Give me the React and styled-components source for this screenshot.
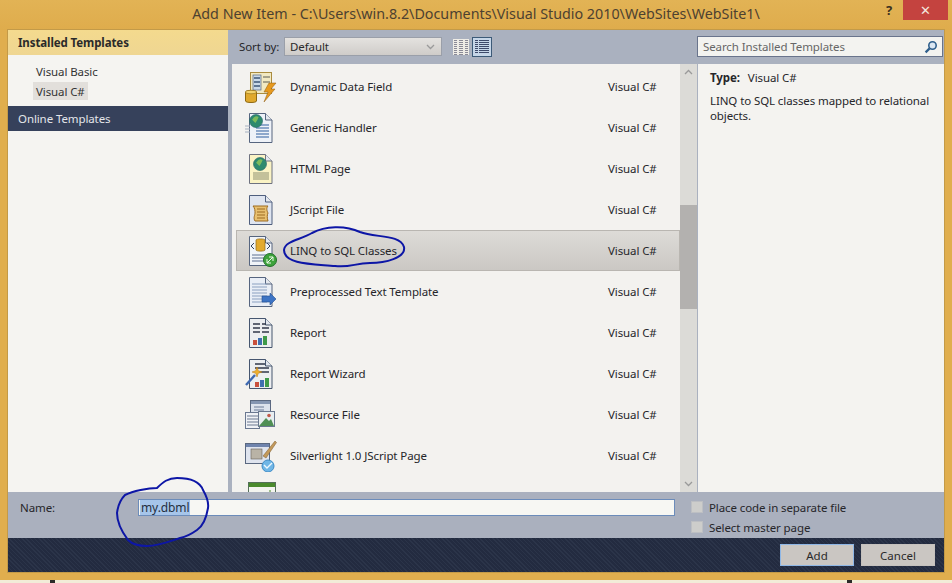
import React from "react";
import styled, { createGlobalStyle, css } from "styled-components";

const Global = createGlobalStyle`
  html, body { margin: 0; padding: 0; background: #e0ae4e; }
  * { box-sizing: border-box; }
`;
const FONT = `"Noto Sans", "Open Sans", "Liberation Sans", sans-serif`;

const Screen = styled.div`
  position: relative; width: 952px; height: 583px; overflow: hidden;
  display: flex; flex-direction: column; background: #e0ae4e; font-family: ${FONT}; font-size: 11.5px; letter-spacing: -0.1px; color: #26262a;
`;
const TitleBar = styled.header`
  height: 30px; flex: none; display: grid; grid-template-columns: 1fr auto 1fr; align-items: start;
  background: linear-gradient(#e2b355, #dfac4c);
`;
const Title = styled.h1`
  grid-column: 2; margin: 4px 0 0; font-weight: 400; font-size: 14.3px; letter-spacing: 0; line-height: 20px; color: #4d4130; white-space: nowrap;
`;
const Controls = styled.div`
  grid-column: 3; justify-self: end; display: flex; align-items: flex-start; margin-right: 4px;
`;
const Help = styled.span`
  font-weight: 700; font-size: 13px; line-height: 20px; color: #3a3020; margin-right: 11px;
`;
const Close = styled.span`
  width: 45px; height: 20px; display: flex; align-items: center; justify-content: center;
  background: #c4433f; color: #f3e6de; font-size: 13px; line-height: 1;
`;
const Dialog = styled.div`
  width: 936px; height: 542px; margin-left: 8px; flex: none; display: flex; flex-direction: column;
  outline: 1px solid #c39a48;
`;
const Main = styled.div`
  height: 462px; flex: none; display: grid; grid-template-columns: 220px 1fr;
`;
const Sidebar = styled.nav`
  background: #f5f4f1; display: flex; flex-direction: column;
`;
const SideHeader = styled.div`
  height: 25px; padding-left: 10px; display: flex; align-items: center; font-weight: 700;
  background: linear-gradient(#f4da8e, #efd692); color: #2a2a2a;
`;
const TreeList = styled.div`
  padding: 7px 0 6px 25px; display: flex; flex-direction: column; align-items: flex-start; gap: 2px;
`;
const TreeItem = styled.div`
  height: 18px; padding: 0 3px; display: flex; align-items: center; color: #333;
  ${p => p.$selected && css`background: #e2dfdb;`}
`;
const OnlineBar = styled.div`
  height: 25px; padding-left: 10px; display: flex; align-items: center; background: #36415b; color: #e4e6ea;
`;
const Content = styled.div`
  background: #aab1bf; display: flex; flex-direction: column; min-width: 0;
`;
const Toolbar = styled.div`
  height: 34px; flex: none; display: flex; align-items: center; padding: 0 1px 1px 11px;
`;
const SortLabel = styled.span`
  width: 45px; color: #26262a;
`;
const SortSelect = styled.div`
  width: 158px; height: 19px; padding: 0 6px 0 5px; display: flex; align-items: center; justify-content: space-between;
  background: linear-gradient(#e4e2df, #cfccc9); border: 1px solid #9a9fa9; color: #2a2a2a;
`;
const ViewButton = styled.span`
  width: 20px; height: 20px; display: flex; align-items: center; justify-content: center;
  margin-left: ${p => p.$first ? "9px" : "1px"};
  ${p => p.$active && css`background: #c6d6e8; border: 1px solid #3c5a78;`}
`;
const SearchBox = styled.div`
  width: 246px; height: 21px; margin-left: auto; padding: 0 4px 0 5px; display: flex; align-items: center; justify-content: space-between;
  background: #f3f3f0; border: 1px solid #69748c; color: #666;
`;
const Panes = styled.div`
  height: 428px; display: flex;
`;
const ItemList = styled.div`
  width: 448px; margin-left: 4px; padding-top: 2px; overflow: hidden; background: #f3f2ef; flex: none;
`;
const ItemRow = styled.div`
  height: 41px; margin-left: 4px; padding-left: 8px; display: flex; align-items: center; border: 1px solid transparent;
  ${p => p.$selected && css`
    background: linear-gradient(#dddbd7, #cbc8c4);
    border-color: #b9b6b1;
  `}
`;
const ItemIcon = styled.span`
  width: 32px; height: 32px; flex: none; display: flex; margin-right: 13px;
`;
const ItemName = styled.span`
  flex: 1; color: #26262a; white-space: nowrap;
`;
const ItemType = styled.span`
  width: 71px; flex: none; color: #26262a;
`;
const Scrollbar = styled.div`
  width: 17px; flex: none; display: flex; flex-direction: column; background: #dcdbd7;
`;
const ScrollArrow = styled.div`
  height: 16px; flex: none; display: flex; align-items: center; justify-content: center;
`;
const TrackGap = styled.div`
  height: ${p => p.$h}px; flex: none;
`;
const Thumb = styled.div`
  height: 104px; flex: none; background: #b3b1af;
`;
const Details = styled.aside`
  flex: 1; background: #f4f3f0; border-left: 1px solid #aab1bf; padding: 5px 12px; line-height: 15px; color: #26262a;
`;
const TypeLine = styled.div`
  margin-bottom: 8px; margin-top: 1px;
`;
const TypeKey = styled.b`
  font-weight: 700; margin-right: 8px;
`;
const NameRow = styled.div`
  height: 46px; flex: none; background: #aab0be; display: flex; padding: 7px 0 0 12px; align-items: flex-start;
`;
const NameLabel = styled.label`
  width: 118px; line-height: 17px; color: #26262a;
`;
const NameField = styled.div`
  width: 537px; height: 17px; background: #f7f7f3; border: 1px solid #6c8cba; display: flex; align-items: center; padding-left: 1px;
`;
const Selection = styled.span`
  background: #a6c5ea; padding: 0 1px; line-height: 15px; color: #25303e; font-size: 12px;
`;
const Checks = styled.div`
  margin-left: 16px; margin-top: 1px; display: flex; flex-direction: column; gap: 6px;
`;
const CheckRow = styled.div`
  height: 14px; display: flex; align-items: center; gap: 6px; color: #26262a;
`;
const CheckBox = styled.span`
  width: 12px; height: 12px; background: #cdcdcb; border: 1px solid #bdbfc3;
`;
const Footer = styled.footer`
  height: 34px; flex: none; display: flex; justify-content: flex-end; align-items: center; gap: 7px; padding-right: 9px;
  background-color: #262f45;
  background-image: repeating-linear-gradient(45deg, #2b3449 0 1px, #232b40 1px 3px);
`;
const DialogButton = styled.button`
  width: 74px; height: 22px; padding: 0; font: inherit; color: #2a2a2a; background: #cac6c2;
  border: 1px solid ${p => p.$primary ? "#8fb7e6" : "#c5c1bd"};
`;
const BelowStrip = styled.div`
  margin-top: 8px; height: 3px; background: #f2ecd8; display: flex;
`;
const Speck = styled.span`
  width: 5px; height: 3px; background: #2b2a28; margin-left: ${p => p.$x}px;
`;
const Annotations = styled.svg`
  position: absolute; left: 0; top: 0; pointer-events: none;
`;

const Page = ({ fill = "#f7f7f2", stroke = "#56657f", children }) => (
  <>
    <path d="M4.5 1.5h16l6.5 6.500V30.500H4.500z" fill={fill} stroke={stroke} />
    <path d="M20.500 1.500v6.500H27" fill="#e4e8ee" stroke={stroke} />
    {children}
  </>
);
const Svg = ({ children }) => <svg width="32" height="32" viewBox="0 0 32 32">{children}</svg>;
const Lines = ({ x = 10, w = 12, ys = [], c = "#5c6f90", sw = 1 }) => (
  <path d={ys.map(y => `M${x} ${y}h${w}`).join("")} stroke={c} strokeWidth={sw} fill="none" />
);
const Globe = ({ cx, cy, r }) => (
  <>
    <circle cx={cx} cy={cy} r={r} fill="#2e8a6e" stroke="#1f5f66" strokeWidth=".6" />
    <path d={`M${cx - r * .6} ${cy - r * .2}q${r * .5} -${r * .8} ${r} -${r * .4}q-${r * .2} ${r * .6} -${r * .5} ${r * .9}z`} fill="#7dbb5c" />
  </>
);
const Bars = ({ x, y }) => (
  <>
    <rect x={x} y={y + 3} width="4" height="5" fill="#c9503c" />
    <rect x={x + 5} y={y + 1} width="4" height="7" fill="#3f6fb0" />
    <rect x={x + 10} y={y - 1} width="4" height="9" fill="#3f9a4a" />
  </>
);

const DynamicIcon = () => (
  <Svg>
    <rect x="5.500" y="1.500" width="21" height="21" fill="#f2e9c2" stroke="#a98b3e" />
    <rect x="8" y="4" width="8" height="15" fill="#c9d9e8" stroke="#56657f" strokeWidth=".7" />
    <Lines x={9} w={6} ys={[7, 11, 15]} c="#3d5576" sw={1.500} />
    <Lines x={18} w={7} ys={[6, 11]} c="#5a5a50" />
    <path d="M0.500 21c0-2 11-2 11 0v9c0 2-11 2-11 0z" fill="#e0a92e" stroke="#8f6a14" />
    <ellipse cx="6" cy="21" rx="5.500" ry="1.800" fill="#f3d36e" stroke="#8f6a14" strokeWidth=".6" />
    <path d="M24 12h7l-5 6h4l-11 13 4-10h-4z" fill="#e79a1f" stroke="#8c5a12" strokeWidth=".5" />
  </Svg>
);
const HandlerIcon = () => (
  <Svg>
    <Page fill="#eef2f8"><Lines x={11} w={13} ys={[13, 16, 19, 22, 25]} c="#2f5f9f" /></Page>
    <Globe cx={11} cy={9} r={6.500} />
    <Lines x={0} w={5} ys={[14, 17, 20]} c="#a5b0c0" />
  </Svg>
);
const HtmlIcon = () => (
  <Svg>
    <Page fill="#faf3c4" stroke="#6e7280"><Lines x={8} w={16} ys={[20, 22, 24, 26]} c="#8d8f70" /></Page>
    <Globe cx={15} cy={11} r={6.500} />
  </Svg>
);
const ScriptIcon = () => (
  <Svg>
    <Page fill="#dfe5f0" stroke="#4f5f7e">
      <path d="M8 12h15c-2 2-1 5 0 7-1 2-1 5 0 8H10c-2-3 0-6 0-8 0-2 0-5-2-7z" fill="#e8c070" stroke="#9c6a20" />
      <Lines x={12} w={8} ys={[15, 18, 21, 24]} c="#9c6a20" />
    </Page>
  </Svg>
);
const LinqIcon = () => (
  <Svg>
    <Page fill="#f1f4f8"><Lines x={7} w={14} ys={[20, 23, 26]} /></Page>
    <path d="M11 5c0-1.500 9-1.500 9 0v10c0 1.500-9 1.500-9 0z" fill="#e3aa2e" stroke="#8f6a14" strokeWidth=".7" />
    <path d="M9 8l-3 3 3 3M22 8l3 3-3 3" stroke="#30405c" fill="none" />
    <circle cx="25" cy="25" r="6.500" fill="#3da33b" stroke="#22702a" />
    <path d="M22 28l6-6M24 22h4v4M22 24v4h4" stroke="#eef8e8" strokeWidth="1" fill="none" />
  </Svg>
);
const PreprocessedIcon = () => (
  <Svg>
    <Page fill="#e9eef6"><Lines x={7} w={15} ys={[8, 11, 14, 17, 20, 23, 26]} c="#8ba0c0" /></Page>
    <path d="M17 20h8v-3l6 6-6 6v-3h-8z" fill="#3d74c4" stroke="#234f90" strokeWidth=".6" />
  </Svg>
);
const ReportIcon = () => (
  <Svg>
    <Page fill="#eceef0" stroke="#46566f">
      <path d="M8 7h7M17 7h4M8 11h7M17 11h7M8 15h7M17 15h7" stroke="#30384a" strokeWidth="1.300" fill="none" />
      <Bars x={8} y={20} />
    </Page>
  </Svg>
);
const WizardIcon = () => (
  <Svg>
    <Page fill="#eceef0" stroke="#46566f">
      <path d="M10 6h10M10 10h14M14 14h10" stroke="#30384a" strokeWidth="1.300" fill="none" />
      <Bars x={10} y={21} />
    </Page>
    <path d="M1 27L10 17" stroke="#3d68b0" strokeWidth="2.400" />
    <path d="M12 9l1.300 3.700 3.700 1.300-3.700 1.300-1.300 3.700-1.300-3.700-3.700-1.300 3.700-1.300z" fill="#eeb030" stroke="#b87818" strokeWidth=".5" />
  </Svg>
);
const ResourceIcon = () => (
  <Svg>
    <rect x="5.500" y="1.500" width="20" height="15" fill="#dce2ec" stroke="#5a6880" />
    <rect x="6" y="2" width="19" height="3" fill="#8596b2" />
    <Lines x={9} w={10} ys={[8, 11]} c="#6d7c98" />
    <rect x="0.500" y="13.500" width="14" height="16" fill="#f0f2f6" stroke="#6a7890" />
    <Lines x={2} w={11} ys={[17, 20, 23, 26]} c="#6a7890" />
    <rect x="13.500" y="12.500" width="16" height="15" fill="#e8eef0" stroke="#6a7890" />
    <path d="M14 27l7-8 3 3 2-2 3 7z" fill="#4f8f54" />
    <circle cx="24" cy="16.500" r="1.800" fill="#c25a4a" />
  </Svg>
);
const SilverlightIcon = () => (
  <Svg>
    <rect x="0.500" y="3.500" width="24" height="20" fill="#dfe4ee" stroke="#5a6880" />
    <rect x="1" y="4" width="23" height="3" fill="#6f84ad" />
    <rect x="6" y="9" width="11" height="10" fill="#b9b3a6" stroke="#66625a" strokeWidth=".6" />
    <path d="M18 16L30 1l1.500 1.500L21 18z" fill="#c39a5c" stroke="#7a5a2a" strokeWidth=".5" />
    <circle cx="23" cy="26" r="6" fill="#6fb6e6" stroke="#3f8cc6" />
    <path d="M19 25l3 3 5-5" stroke="#eef8ff" strokeWidth="1.400" fill="none" />
  </Svg>
);
const SheetIcon = () => (
  <Svg>
    <rect x="3.500" y="1.500" width="27" height="30" fill="#f3f4ef" stroke="#55705a" />
    <rect x="4" y="2" width="26" height="4" fill="#4a8a2c" />
    <path d="M25 14v-5M23 12h4" stroke="#4a8a2c" />
  </Svg>
);

const items = [
  ["Dynamic Data Field", DynamicIcon],
  ["Generic Handler", HandlerIcon],
  ["HTML Page", HtmlIcon],
  ["JScript File", ScriptIcon],
  ["LINQ to SQL Classes", LinqIcon, true],
  ["Preprocessed Text Template", PreprocessedIcon],
  ["Report", ReportIcon],
  ["Report Wizard", WizardIcon],
  ["Resource File", ResourceIcon],
  ["Silverlight 1.0 JScript Page", SilverlightIcon],
];

const Grid = ({ wide }) => (
  <svg width="16" height="16" viewBox="0 0 16 16">
    {!wide && <rect x="0" y="0" width="16" height="16" fill="#eeece6" />}
    {wide
      ? [1.5, 3.5, 5.5, 7.5, 9.5, 11.5, 13.5].map(y => (
          <path key={y} d={`M1 ${y}h3M5 ${y}h10`} stroke="#3e4a6a" strokeWidth="1" />
        ))
      : [1.5, 3.5, 5.5, 7.5, 9.5, 11.5, 13.5, 15.5].map(y => (
          <path key={y} d={`M1 ${y}h3M6 ${y}h4M12 ${y}h3`} stroke="#8a8a96" strokeWidth="1" />
        ))}
  </svg>
);
const Chevron = ({ up }) => (
  <svg width="9" height="6" viewBox="0 0 9 6">
    <path d={up ? "M1 5l3.500-3.500L8 5" : "M1 1l3.500 3.500L8 1"} fill="none" stroke="#9a9a9a" strokeWidth="1.300" />
  </svg>
);
const SearchGlyph = () => (
  <svg width="14" height="14" viewBox="0 0 14 14">
    <circle cx="8.500" cy="5.500" r="3.700" fill="#dbe7f2" stroke="#2f5f8c" strokeWidth="1.600" />
    <path d="M5.600 8.400L1.600 12.400" stroke="#2f5f8c" strokeWidth="2.200" />
  </svg>
);

export default function App() {
  return (
    <Screen>
      <Global />
      <TitleBar>
        <Title>Add New Item - C:\Users\win.8.2\Documents\Visual Studio 2010\WebSites\WebSite1\</Title>
        <Controls>
          <Help>?</Help>
          <Close>✕</Close>
        </Controls>
      </TitleBar>
      <Dialog>
        <Main>
          <Sidebar>
            <SideHeader>Installed Templates</SideHeader>
            <TreeList>
              <TreeItem>Visual Basic</TreeItem>
              <TreeItem $selected>Visual C#</TreeItem>
            </TreeList>
            <OnlineBar>Online Templates</OnlineBar>
          </Sidebar>
          <Content>
            <Toolbar>
              <SortLabel>Sort by:</SortLabel>
              <SortSelect>Default<Chevron /></SortSelect>
              <ViewButton $first><Grid /></ViewButton>
              <ViewButton $active><Grid wide /></ViewButton>
              <SearchBox>Search Installed Templates<SearchGlyph /></SearchBox>
            </Toolbar>
            <Panes>
              <ItemList>
                {items.map(([name, Icon, selected]) => (
                  <ItemRow key={name} $selected={selected}>
                    <ItemIcon><Icon /></ItemIcon>
                    <ItemName>{name}</ItemName>
                    <ItemType>Visual C#</ItemType>
                  </ItemRow>
                ))}
                <ItemRow>
                  <ItemIcon><SheetIcon /></ItemIcon>
                </ItemRow>
              </ItemList>
              <Scrollbar>
                <ScrollArrow><Chevron up /></ScrollArrow>
                <TrackGap $h={125} />
                <Thumb />
                <TrackGap $h={167} />
                <ScrollArrow><Chevron /></ScrollArrow>
              </Scrollbar>
              <Details>
                <TypeLine><TypeKey>Type:</TypeKey>Visual C#</TypeLine>
                LINQ to SQL classes mapped to relational objects.
              </Details>
            </Panes>
          </Content>
        </Main>
        <NameRow>
          <NameLabel>Name:</NameLabel>
          <NameField><Selection>my.dbml</Selection></NameField>
          <Checks>
            <CheckRow><CheckBox />Place code in separate file</CheckRow>
            <CheckRow><CheckBox />Select master page</CheckRow>
          </Checks>
        </NameRow>
        <Footer>
          <DialogButton $primary>Add</DialogButton>
          <DialogButton>Cancel</DialogButton>
        </Footer>
      </Dialog>
      <BelowStrip>
        <Speck $x={50} />
        <Speck $x={792} />
      </BelowStrip>
      <Annotations width="952" height="583" viewBox="0 0 952 583" fill="none" stroke="#0d16a6" strokeWidth="2">
        <path d="M284 250C285 241 300 240 312 233C325 226 345 225 360 232C375 238 400 234 404 247C406 258 385 263 370 263C355 263 350 268 335 266C315 264 284 265 284 250Z" />
        <path d="M157 488C163 482 168 478 177 478C190 478 200 482 203 490C207 497 209 502 208 508C206 520 203 526 197 530C190 535 185 537 180 538C168 542 158 546 147 546C138 546 132 544 128 540C122 532 117 524 117 513C118 505 121 499 125 495C133 491 148 488 157 488Z" />
      </Annotations>
    </Screen>
  );
}
